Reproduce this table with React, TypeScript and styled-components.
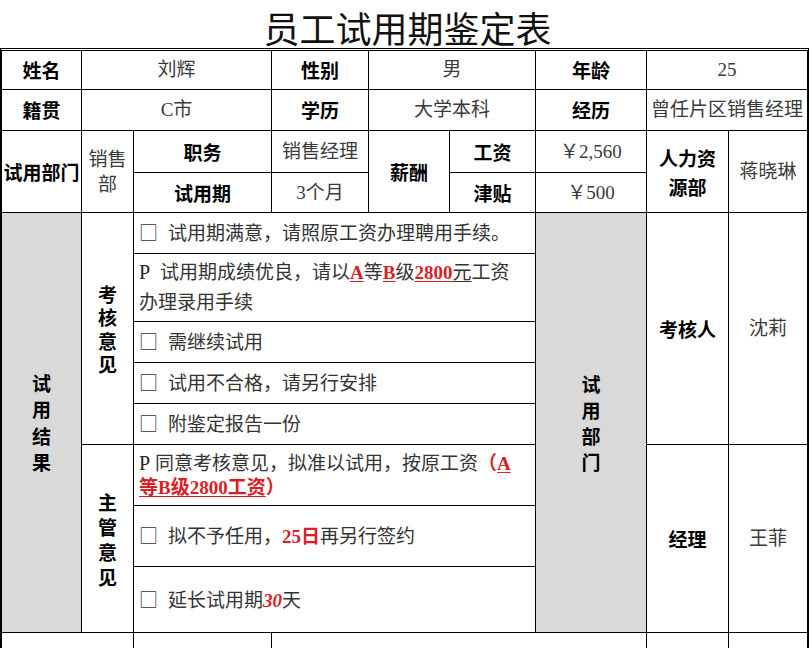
import React from 'react';
import styled, { createGlobalStyle, css } from 'styled-components';

const Global = createGlobalStyle`
  html, body { margin: 0; padding: 0; background: #fff; overflow: hidden; }
  body { font-family: "Liberation Serif", "Noto Sans CJK SC", serif; }
`;

const Page = styled.div`
  width: 810px;
  height: 648px;
  overflow: hidden;
`;

const Title = styled.h1`
  margin: 0;
  height: 48px;
  box-sizing: border-box;
  padding: 6px 0 0 5px;
  font: 400 36px/42px "Noto Sans CJK SC", sans-serif;
  text-align: center;
  color: #111;
`;

const Sheet = styled.div`
  display: grid;
  width: max-content;
  grid-template-columns: 79px 51px 137px 96px 80px 85px 110px 81px 78px;
  grid-template-rows: 38px 40px 41px 39px 40px 67px 40px 40px 40px 60px 60px 65px 40px;
  gap: 1px;
  background: #000;
  background-clip: padding-box;
  border-top: 3px double #000;
  border-left: 2px solid #000;
  border-right: 2px solid #000;
`;

type Pos = { $c: string; $r: string };

const cellBase = css<Pos>`
  grid-column: ${(p) => p.$c};
  grid-row: ${(p) => p.$r};
  display: flex;
  align-items: center;
  justify-content: center;
  text-align: center;
  font-size: 19px;
  line-height: 24px;
  min-width: 0;
  background: #fff;
`;

const Label = styled.div<Pos & { $fill?: boolean }>`
  ${cellBase};
  background: ${(p) => (p.$fill ? '#d9d9d9' : '#fff')};
  color: #000;
  font-weight: 700;
  font-family: "Noto Sans CJK SC", sans-serif;
`;

const Value = styled.div<Pos>`
  ${cellBase};
  color: #3a3a3a;
  font-weight: 400;
`;

const Empty = styled.div<Pos>`
  ${cellBase};
`;

const Opinion = styled.div<Pos & { $lh?: number }>`
  ${cellBase};
  justify-content: flex-start;
  text-align: left;
  padding-left: 5px;
  color: #333;
  line-height: ${(p) => p.$lh ?? 24}px;
`;

const OpinionText = styled.div`
  white-space: nowrap;
`;

const Stack = styled.span<{ $lh: number }>`
  display: block;
  width: 1em;
  word-break: break-all;
  line-height: ${(p) => p.$lh}px;
`;

const Wrap = styled.span<{ $w: number; $lh: number }>`
  display: block;
  max-width: ${(p) => p.$w}px;
  line-height: ${(p) => p.$lh}px;
`;

const Mark = styled.span<{ $w: number }>`
  display: inline-block;
  width: ${(p) => p.$w}px;
  font-family: "Noto Sans CJK SC", sans-serif;
  color: #333;
`;

const PMark = styled.span<{ $w: number }>`
  display: inline-block;
  width: ${(p) => p.$w}px;
  font-family: "Liberation Serif", serif;
  color: #222;
  font-size: 20px;
`;

const Red = styled.span<{ $u?: boolean; $i?: boolean }>`
  color: #d92026;
  font-weight: 700;
  font-style: ${(p) => (p.$i ? 'italic' : 'normal')};
  text-decoration: ${(p) => (p.$u ? 'underline' : 'none')};
  text-decoration-thickness: 1px;
  text-underline-offset: 2px;
`;

const Under = styled.span`
  text-decoration: underline;
  text-decoration-thickness: 1px;
  text-underline-offset: 2px;
`;

const Box = () => <Mark $w={29}>□</Mark>;

export default function App() {
  return (
    <Page>
      <Global />
      <Title>员工试用期鉴定表</Title>
      <Sheet>
        <Label $c="1 / 2" $r="1">姓名</Label>
        <Value $c="2 / 4" $r="1">刘辉</Value>
        <Label $c="4 / 5" $r="1">性别</Label>
        <Value $c="5 / 7" $r="1">男</Value>
        <Label $c="7 / 8" $r="1">年龄</Label>
        <Value $c="8 / 10" $r="1">25</Value>

        <Label $c="1 / 2" $r="2">籍贯</Label>
        <Value $c="2 / 4" $r="2">C市</Value>
        <Label $c="4 / 5" $r="2">学历</Label>
        <Value $c="5 / 7" $r="2">大学本科</Value>
        <Label $c="7 / 8" $r="2">经历</Label>
        <Value $c="8 / 10" $r="2">曾任片区销售经理</Value>

        <Label $c="1 / 2" $r="3 / 5">试用部门</Label>
        <Value $c="2 / 3" $r="3 / 5">
          <Wrap $w={40} $lh={25}>销售部</Wrap>
        </Value>
        <Label $c="3 / 4" $r="3">职务</Label>
        <Value $c="4 / 5" $r="3">销售经理</Value>
        <Label $c="5 / 6" $r="3 / 5">薪酬</Label>
        <Label $c="6 / 7" $r="3">工资</Label>
        <Value $c="7 / 8" $r="3">￥2,560</Value>
        <Label $c="8 / 9" $r="3 / 5">
          <Wrap $w={60} $lh={29}>人力资源部</Wrap>
        </Label>
        <Value $c="9 / 10" $r="3 / 5">蒋晓琳</Value>

        <Label $c="3 / 4" $r="4">试用期</Label>
        <Value $c="4 / 5" $r="4">3个月</Value>
        <Label $c="6 / 7" $r="4">津贴</Label>
        <Value $c="7 / 8" $r="4">￥500</Value>

        <Label $c="1 / 2" $r="5 / 13" $fill>
          <Stack $lh={26.5}>试用结果</Stack>
        </Label>
        <Label $c="2 / 3" $r="5 / 10">
          <Stack $lh={23.5}>考核意见</Stack>
        </Label>
        <Opinion $c="3 / 7" $r="5">
          <OpinionText><Box />试用期满意，请照原工资办理聘用手续。</OpinionText>
        </Opinion>
        <Opinion $c="3 / 7" $r="6" $lh={30}>
          <OpinionText>
            <PMark $w={21}>P</PMark>试用期成绩优良，请以<Red $u>A</Red>等<Red $u>B</Red>级<Red $u>2800</Red><Under>元</Under>工资
            <br />
            办理录用手续
          </OpinionText>
        </Opinion>
        <Opinion $c="3 / 7" $r="7">
          <OpinionText><Box />需继续试用</OpinionText>
        </Opinion>
        <Opinion $c="3 / 7" $r="8">
          <OpinionText><Box />试用不合格，请另行安排</OpinionText>
        </Opinion>
        <Opinion $c="3 / 7" $r="9">
          <OpinionText><Box />附鉴定报告一份</OpinionText>
        </Opinion>

        <Label $c="2 / 3" $r="10 / 13">
          <Stack $lh={25}>主管意见</Stack>
        </Label>
        <Opinion $c="3 / 7" $r="10" $lh={24}>
          <OpinionText>
            <PMark $w={16}>P</PMark>同意考核意见，拟准以试用，按原工资<Red>（</Red><Red $u>A</Red>
            <br />
            <Red $u>等B级2800工资</Red><Red>）</Red>
          </OpinionText>
        </Opinion>
        <Opinion $c="3 / 7" $r="11">
          <OpinionText><Box />拟不予任用，<Red>25日</Red>再另行签约</OpinionText>
        </Opinion>
        <Opinion $c="3 / 7" $r="12">
          <OpinionText><Box />延长试用期<Red $i>30</Red>天</OpinionText>
        </Opinion>

        <Label $c="7 / 8" $r="5 / 13" $fill>
          <Stack $lh={26}>试用部门</Stack>
        </Label>
        <Label $c="8 / 9" $r="5 / 10">考核人</Label>
        <Value $c="9 / 10" $r="5 / 10">沈莉</Value>
        <Label $c="8 / 9" $r="10 / 13">经理</Label>
        <Value $c="9 / 10" $r="10 / 13">王菲</Value>

        <Empty $c="1 / 3" $r="13" />
        <Empty $c="3 / 4" $r="13" />
        <Empty $c="4 / 8" $r="13" />
        <Empty $c="8 / 9" $r="13" />
        <Empty $c="9 / 10" $r="13" />
      </Sheet>
    </Page>
  );
}
